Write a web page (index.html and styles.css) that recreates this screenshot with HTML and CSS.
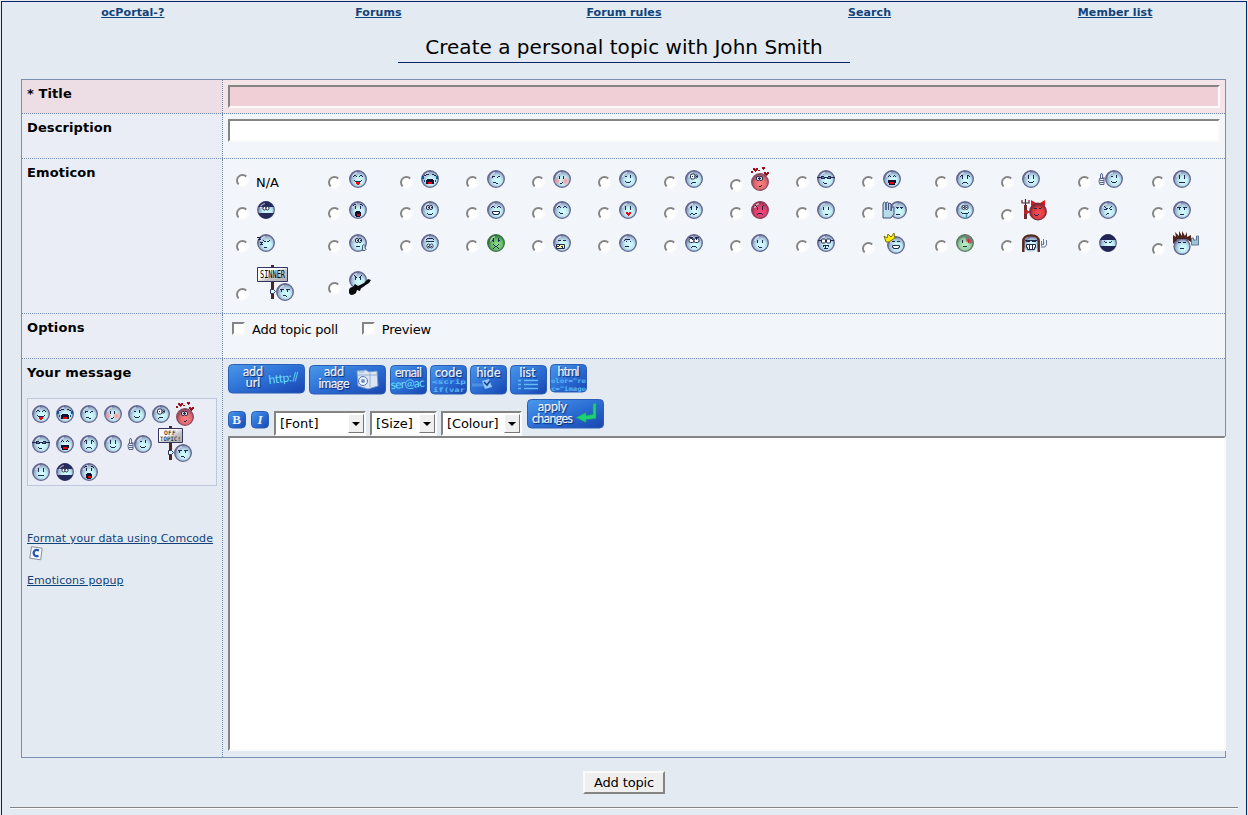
FILE: index.html
```html
<!DOCTYPE html>
<html lang="en">
<head>
<meta charset="utf-8">
<title>Create a personal topic with John Smith</title>
<link rel="stylesheet" href="styles.css">
</head>
<body>
<svg class="sprites" width="0" height="0" aria-hidden="true">
<defs>
<radialGradient id="gBlue" cx=".57" cy=".6" r=".58"><stop offset="0" stop-color="#d2ffff"/><stop offset=".45" stop-color="#c3ecf3"/><stop offset=".8" stop-color="#9bb2cc"/><stop offset="1" stop-color="#676a94"/></radialGradient>
<radialGradient id="gRed" cx=".55" cy=".6" r=".58"><stop offset="0" stop-color="#ff8080"/><stop offset=".6" stop-color="#e06a70"/><stop offset="1" stop-color="#7d4a62"/></radialGradient>
<radialGradient id="gRage" cx=".55" cy=".6" r=".58"><stop offset="0" stop-color="#f84878"/><stop offset=".6" stop-color="#dc426c"/><stop offset="1" stop-color="#80334f"/></radialGradient>
<radialGradient id="gDevil" cx=".55" cy=".6" r=".58"><stop offset="0" stop-color="#ff4d55"/><stop offset=".6" stop-color="#dc3b42"/><stop offset="1" stop-color="#6b2430"/></radialGradient>
<radialGradient id="gGreen" cx=".57" cy=".6" r=".58"><stop offset="0" stop-color="#91e391"/><stop offset=".6" stop-color="#65b868"/><stop offset="1" stop-color="#2b6837"/></radialGradient>
<radialGradient id="gBorg" cx=".5" cy=".6" r=".58"><stop offset="0" stop-color="#bdf5c7"/><stop offset=".6" stop-color="#97cba2"/><stop offset="1" stop-color="#4c7058"/></radialGradient>
<linearGradient id="gBtn" x1="0" y1="0" x2="1" y2="1"><stop offset="0" stop-color="#4a98ea"/><stop offset=".5" stop-color="#2c6fd5"/><stop offset="1" stop-color="#1845b0"/></linearGradient>
<linearGradient id="gSign" x1="0" y1="0" x2="1" y2="1"><stop offset=".4" stop-color="#fff"/><stop offset=".6" stop-color="#c4c4c8"/><stop offset="1" stop-color="#aaaab0"/></linearGradient>
<radialGradient id="gBlush"><stop offset="0" stop-color="#ff8f92"/><stop offset="1" stop-color="#ff8f92" stop-opacity="0"/></radialGradient>
</defs>
<symbol id="ball"><circle cx="9" cy="9" r="8.300" fill="url(#gBlue)" stroke="#60658f" stroke-width="1.300"/><path d="M3.500 7Q4.500 3.500 8 2.700" class="shine"/></symbol>
<symbol id="smile"><use href="#ball"/><path class="px" d="M6.500 5v4M11.500 5v4M6 11.500h1M7 12.500h4M11 11.500h1"/></symbol>
<symbol id="neutral"><use href="#ball"/><path class="px" d="M6.500 5v4M11.500 5v4M6 12.500h6"/></symbol>
<symbol id="blank"><use href="#ball"/><path class="px" d="M6.500 6v3M11.500 6v3M8 13.500h3"/></symbol>
<symbol id="plain"><use href="#ball"/><path class="px" d="M6.500 6v3M11.500 6v3M7 12.500h1M8 13.500h3"/></symbol>
<symbol id="tongue"><use href="#ball"/><path class="px" d="M4 6.500h1M5 5.500h2M7 6.500h1M10 6.500h1M11 5.500h2M13 6.500h1M5 10.500h1M6 11.500h6M12 10.500h1"/><path d="M7 12h4v2h-1v1h-2v-1h-1z" fill="#f01"/></symbol>
<symbol id="cry"><use href="#ball"/><path class="px" d="M3 5.500h2M5 4.500h3M11 4.500h2M13 5.500h2"/><path d="M1 6h2v3h-2zM15 6h2v3h-2zM3 10h1v2h-1zM14 10h1v2h-1z" fill="#06589b"/><path d="M6 9h6v1h1v4h-8v-4h1z" fill="#111331"/><path d="M7 12h4v2h-4z" fill="#e01"/></symbol>
<symbol id="skeptic"><use href="#ball"/><path class="px" d="M5 6.500h3M10 7.500h1M11 6.500h2M6 12.500h3M9 13.500h2M5 7.500h1"/></symbol>
<symbol id="blush"><use href="#ball"/><circle cx="12.500" cy="11" r="4.500" fill="url(#gBlush)"/><circle cx="4" cy="11" r="3.500" fill="url(#gBlush)"/><path class="px" d="M6.500 6v3M10.500 6v3M7 13.500h2M9 12.500h1"/></symbol>
<symbol id="wink"><use href="#ball"/><path class="px" d="M6 6.500h2M11.500 5v3M6 11.500h1M7 12.500h4M11 11.500h1"/></symbol>
<symbol id="confused"><use href="#ball"/><rect class="eye" x="5.500" y="4" width="4.500" height="5" rx="1.500"/><rect class="eye" x="10" y="5" width="2.500" height="3" rx="1"/><path class="px" d="M7 6.500h1M11 6.500h1M6 13.500h1M7 12.500h4"/></symbol>
<symbol id="love"><circle cx="9" cy="15" r="8.300" fill="url(#gRed)" stroke="#8b4a5d" stroke-width="1.300"/><path d="M2 1h2v1h1v-1h2v2h-1v1h-1v1h-1v-1h-1v-1h-1zM11 0h3v2h-1v1h-1v-1h-1zM13 5h2v1h1v-1h2v2h-1v1h-1v1h-1v-1h-1v-1h-1zM7 3h2v1h-2zM0 4h2v2h-2z" fill="#9c0f1d"/><rect class="eye" x="5.500" y="9.500" width="3" height="4" rx="1.500"/><rect class="eye" x="8.500" y="9.500" width="3" height="4" rx="1.500"/><path class="px" d="M7 11.500h1M9 11.500h1M8 19.500h2M10 18.500h1"/></symbol>
<symbol id="cool"><use href="#ball"/><path class="px" d="M0 7.500h18M4 8.500h4M10 8.500h4M4 6.500h3M11 6.500h3M6 12.500h1M7 13.500h3"/><path d="M5 7h2v1h-2zM11 7h2v1h-2z" fill="#6d7da0"/></symbol>
<symbol id="laugh"><use href="#ball"/><path class="px" d="M5 6.500h1M6 5.500h1M7 6.500h1M10 6.500h1M11 5.500h1M12 6.500h1"/><path d="M5 10h8v3h-1v2h-6v-2h-1z" fill="#101431"/><path d="M7 12h4v2h-4z" fill="#e00"/></symbol>
<symbol id="sad"><use href="#ball"/><path class="px" d="M4 6.500h1M5 5.500h2M6.500 6v3M11.500 6v3M11 5.500h2M13 6.500h1M6 13.500h1M7 12.500h4M11 13.500h1"/></symbol>
<symbol id="thumbs"><path d="M2.500 8V5q.5-2 1.500-1.500T4.500 8H7M1.500 8.500h4.500v6h-4l-1-3zM2 10.500h4M2 12.500h4" fill="#e8f4fa" stroke="#59638e"/><use href="#wink" x="7"/></symbol>
<symbol id="cyber"><use href="#ball"/><path d="M1 6Q4 .3 9 .3t8 5.700zM1 12h16Q14 17.700 9 17.700T1 12z" fill="#25295b"/><rect class="eye" x="6" y="5.500" width="3" height="3.500" rx="1.500"/><rect class="eye" x="9" y="5.500" width="3" height="3.500" rx="1.500"/><path class="shine" d="M3.500 5.500Q5 3 8 2.500"/></symbol>
<symbol id="ninja"><use href="#ball"/><path d="M1 6Q4 .3 9 .3t8 5.700zM1 12h16Q14 17.700 9 17.700T1 12z" fill="#202556"/><path class="px" d="M5 7.500h1M6 8.500h2M10 8.500h2M12 7.500h1"/></symbol>
<symbol id="shock"><use href="#ball"/><path class="px" d="M4 4.500h1M5 3.500h2M6.500 5v3M11.500 5v3M11 3.500h2M13 4.500h1"/><path d="M7 10h4v1h1v4h-1v1h-4v-1h-1v-4h1z" fill="#10122b"/><path d="M8 13h3v2h-3z" fill="#e00"/></symbol>
<symbol id="rolling"><use href="#ball"/><rect class="eye" x="5.500" y="4.500" width="3" height="4" rx="1.500"/><rect class="eye" x="8.500" y="4.500" width="3" height="4" rx="1.500"/><path class="px" d="M7 6.500h1M10 6.500h1M6 12.500h1M7 13.500h4M11 12.500h1"/></symbol>
<symbol id="grin"><use href="#ball"/><path class="px" d="M4 6.500h1M5 5.500h2M7 6.500h1M10 6.500h1M11 5.500h2M13 6.500h1"/><path class="eye" d="M5.500 10.500h7v2h-1v1h-5v-1h-1z"/></symbol>
<symbol id="glee"><use href="#ball"/><path class="px" d="M4 6.500h1M5 5.500h2M7 6.500h1M10 6.500h1M11 5.500h2M13 6.500h1M6 11.500h1M7 12.500h3"/></symbol>
<symbol id="kiss"><use href="#ball"/><path class="px" d="M6.500 5v4M11.500 5v4"/><path d="M7 11h2v1h1v-1h2v2h-1v1h-1v1h-1v-1h-1v-1h-1z" fill="#f00010"/></symbol>
<symbol id="worry"><use href="#ball"/><path class="px" d="M5 6.500h1M6.500 5v4M11.500 5v4M12 6.500h1M5 13.500h1M6 12.500h2M8 13.500h2M10 12.500h2"/></symbol>
<symbol id="rage"><circle cx="9" cy="9" r="8.300" fill="url(#gRage)" stroke="#8b3a58" stroke-width="1.300"/><path class="shine" d="M3.500 7Q4.500 3.500 8 2.700"/><path class="px" d="M4 4.500h1M5 5.500h1M6.500 6v3M12 4.500h1M11 5.500h1M11.500 6v3M7 12.500h4M11 13.500h1M6 13.500h1"/></symbol>
<symbol id="hand"><use href="#ball" x="7"/><path class="px" d="M14 6.500h3M18 6.500h3M15.500 7v1M19.500 7v1M14 13.500h4"/><path d="M1 17V4q0-3 1.500-3T4 4v5-7q1.500-2 2.500 0v7-6q1.500-2 2.500 0v7l1-4q2-1 2 1v6l-3 4z" fill="#b7dce8" stroke="#454c7c"/></symbol>
<symbol id="drool"><use href="#ball"/><rect class="eye" x="6" y="4.500" width="3" height="4" rx="1.500"/><rect class="eye" x="9" y="4.500" width="3" height="4" rx="1.500"/><path class="px" d="M7 6.500h1M10 6.500h1M5 11.500h1M6 12.500h6M12 11.500h1"/><path d="M10.500 13v5" stroke="#409ac4" stroke-width="1.500"/></symbol>
<symbol id="devil"><path d="M4.500 2v18M1 1v3h7V1M4.500 0v5" fill="none" stroke="#54252c" stroke-width="1.200"/><path d="M3 6h3v14H3z" fill="#6b2d30"/><path d="M10 1v6l5-3zM24 1v6l-5-3z" fill="#e8121c"/><circle cx="17" cy="12.500" r="8.300" fill="url(#gDevil)" stroke="#7c2c38" stroke-width="1.300"/><path d="M3 11h3l3 2-3 2H3z" fill="#b8232c"/><path class="px" d="M13 9.500h3M18 9.500h2M20 8.500h1M13 15.500h1M14 16.500h3M17 15.500h1"/></symbol>
<symbol id="grr"><use href="#ball"/><path class="px" d="M5 5.500h1M6 6.500h1M7 7.500h2M12 5.500h1M11 6.500h1M10 7.500h1M5 8.500h3M11 8.500h2M7 13.500h1M8 12.500h2"/></symbol>
<symbol id="dry"><use href="#ball"/><path class="px" d="M4 6.500h4M10 6.500h4M6.500 7v2M11.500 7v2M7 13.500h4"/></symbol>
<symbol id="zzz"><use href="#ball"/><path class="px" d="M0 3.500h4M2 4.500h1M1 5.500h3M3 8.500h3M4 9.500h1M3 10.500h3M6 6.500h1M7 7.500h2M10 7.500h2M12 6.500h1M7 13.500h3"/></symbol>
<symbol id="puzzled"><use href="#ball"/><rect class="eye" x="6.500" y="4.500" width="3" height="4" rx="1.500"/><rect class="eye" x="9.500" y="4.500" width="3" height="4" rx="1.500"/><path class="px" d="M7 12.500h4M8 6.500h1M11 6.500h1"/><path d="M13.500 11.500q2-2 2.500 0v2q2 2 0 3h-2.500z" fill="#bcecf4" stroke="#4c577e"/></symbol>
<symbol id="flip"><use href="#ball"/><rect class="eye" x="6" y="10" width="3" height="4" rx="1.500"/><rect class="eye" x="9" y="10" width="3" height="4" rx="1.500"/><path class="px" d="M5 7.500h8M5 5.500h1M6 4.500h6M12 5.500h1M7 12.500h1M10 12.500h1"/></symbol>
<symbol id="sick"><circle cx="9" cy="9" r="8.300" fill="url(#gGreen)" stroke="#35703f" stroke-width="1.300"/><path class="shine" d="M3.500 7Q4.500 3.500 8 2.700"/><path class="px" d="M5 6.500h1M6.500 4v4M11.500 4v4M12 6.500h1M6 10.500h1M7 11.500h1M8 12.500h2M10 11.500h1M11 10.500h1M7 13.500h1M6 14.500h1M10 13.500h1M11 14.500h1"/></symbol>
<symbol id="teeth"><use href="#ball"/><path class="px" d="M5 6.500h3M10 6.500h3"/><path d="M3.500 10.500h8v4h-8z" fill="#fff9a4" stroke="#202a45"/><path class="px" d="M4 12.500h2M8 12.500h2M6.500 11v1M9.500 13v1"/></symbol>
<symbol id="wonder"><use href="#ball"/><path class="px" d="M5 6.500h1M6 5.500h5M7.500 7v1M11.500 7v1M6 12.500h4"/><path d="M6 7h1v2h-1zM10 7h1v2h-1z" fill="#fff"/></symbol>
<symbol id="eek"><use href="#ball"/><rect class="eye" x="4" y="4.500" width="5" height="4" rx="1.500"/><rect class="eye" x="9" y="4.500" width="5" height="4" rx="1.500"/><path class="px" d="M4 3.500h4M10 3.500h4M7 5.500h1M11 5.500h1M6 13.500h1M7 12.500h4M11 13.500h1"/></symbol>
<symbol id="nerd"><use href="#ball"/><rect class="eye" x="4.500" y="5" width="4" height="4" rx="1"/><rect class="eye" x="9.500" y="5" width="4" height="4" rx="1"/><path class="px" d="M1 6.500h4M14 6.500h3M6 11.500h6M7 14.500h4M6.500 12v1M8.500 12v2M11.500 12v1"/></symbol>
<symbol id="king"><use href="#ball" x="4" y="4"/><path d="M1 4l3 2 1-4 3 3 3-4 1 5-6 4H3z" fill="#f6ec08" stroke="#776d17"/><path class="px" d="M9 9.500h3M14 9.500h3"/><path class="eye" d="M9.500 13.500h7v2h-1v1h-5v-1h-1z"/></symbol>
<symbol id="borg"><circle cx="9" cy="9" r="8.300" fill="url(#gBorg)" stroke="#607766" stroke-width="1.300"/><path d="M9 1q7 0 8 7l-3 2-4-4z" fill="#737c79"/><path class="px" d="M6.500 6v3M7 12.500h4"/><path d="M12.500 5v4M10.500 7h4" stroke="#f01824"/></symbol>
<symbol id="rocker"><circle cx="9" cy="10" r="7.500" fill="url(#gBlue)"/><path d="M1.300 18V8Q1 1.500 9 1.500T16.700 8v10" fill="none" stroke="#532d24" stroke-width="2.500"/><path class="px" d="M3 6.500h12M4 7.500h4M10 7.500h4"/><path class="eye" d="M4.500 10.500h9v3h-1v2h-7v-2h-1z"/><path class="px" d="M7.500 11v4M10.500 11v4"/><path d="M19.500 12V7m0 4l3-2m-1 2V5m3 5V6M19 13h4l2-3" fill="none" stroke="#65789d"/></symbol>
<symbol id="punk"><circle cx="9" cy="15.500" r="8" fill="url(#gBlue)" stroke="#60658f" stroke-width="1.300"/><path d="M0 13V4l3 2-1-5 4 4V0l3 5V0l3 5 2-4v5l4-2v7l-5-3H5z" fill="#4b221d"/><path class="px" d="M5 11.500h3M10 11.500h3M7 17.500h4"/><path d="M18.500 7v7h7V5h-2v4h-3V7z" fill="#9fc6d6" stroke="#5b7792"/></symbol>
<symbol id="grump"><use href="#ball"/><path class="px" d="M4 6.500h4M10 6.500h4M5.500 7v2M11.500 7v2M7 12.500h3M10 13.500h1"/></symbol>
<symbol id="sinner"><path d="M15.500 0v34" stroke="#4b2724" stroke-width="3"/><path d="M.5 2.500h30v14H.5z" fill="url(#gSign)" stroke="#34345f"/><text x="3" y="13" textLength="25" lengthAdjust="spacingAndGlyphs" class="sign">SINNER</text><use href="#grump" x="19" y="18"/><path d="M13.500 24.500h3l2 2-2 2h-3z" fill="#d4ffff" stroke="#34345f"/></symbol>
<symbol id="offtopic"><path d="M12.500 0v34" stroke="#4b2724" stroke-width="3"/><path d="M.5 2.500h24v14H.5z" fill="url(#gSign)" stroke="#34345f"/><text x="6" y="8.800" textLength="12" lengthAdjust="spacingAndGlyphs" class="sign sign-small">OFF</text><text x="2" y="15.200" textLength="21" lengthAdjust="spacingAndGlyphs" class="sign sign-small">TOPIC!</text><use href="#grump" x="16" y="18"/><path d="M10.500 24.500h3l2 2-2 2h-3z" fill="#d4ffff" stroke="#34345f"/></symbol>
<symbol id="guitar"><use href="#ball"/><path class="px" d="M5 4.500h1M6 5.500h1M7 6.500h1M12 4.500h1M11 5.500h1M10 6.500h1M6.500 6v3M11.500 6v3"/><path d="M0 20q0-4 4-4l2-3 3 2 6-3 4-4 3 1-2 3-8 5-1 3-3-1-1 3q-5 4-7 0z" fill="#080a0c"/></symbol>
</svg>

<div class="frame">
<nav class="nav"><a href="#">ocPortal-?</a><a href="#">Forums</a><a href="#">Forum rules</a><a href="#">Search</a><a href="#">Member list</a></nav>
<h1 class="heading">Create a personal topic with John Smith</h1>

<form class="form">
<div class="row row-title required"><div class="label">* Title</div><div class="field"><input class="text" type="text"></div></div>
<div class="row row-desc"><div class="label">Description</div><div class="field"><input class="text" type="text"></div></div>
<div class="row row-emo"><div class="label">Emoticon</div>
<div class="field picks">
<label class="pick pick-na"><input type="radio" name="e"><span>N/A</span></label>
<label class="pick"><input type="radio" name="e"><svg class="emo"><use href="#tongue"/></svg></label>
<label class="pick"><input type="radio" name="e"><svg class="emo"><use href="#cry"/></svg></label>
<label class="pick"><input type="radio" name="e"><svg class="emo"><use href="#skeptic"/></svg></label>
<label class="pick"><input type="radio" name="e"><svg class="emo"><use href="#blush"/></svg></label>
<label class="pick"><input type="radio" name="e"><svg class="emo"><use href="#wink"/></svg></label>
<label class="pick"><input type="radio" name="e"><svg class="emo"><use href="#confused"/></svg></label>
<label class="pick"><input type="radio" name="e"><svg class="emo tall"><use href="#love"/></svg></label>
<label class="pick"><input type="radio" name="e"><svg class="emo"><use href="#cool"/></svg></label>
<label class="pick"><input type="radio" name="e"><svg class="emo"><use href="#laugh"/></svg></label>
<label class="pick"><input type="radio" name="e"><svg class="emo"><use href="#sad"/></svg></label>
<label class="pick"><input type="radio" name="e"><svg class="emo"><use href="#smile"/></svg></label>
<label class="pick"><input type="radio" name="e"><svg class="emo wide out"><use href="#thumbs"/></svg></label>
<label class="pick"><input type="radio" name="e"><svg class="emo"><use href="#neutral"/></svg></label>

<label class="pick"><input type="radio" name="e"><svg class="emo"><use href="#cyber"/></svg></label>
<label class="pick"><input type="radio" name="e"><svg class="emo"><use href="#shock"/></svg></label>
<label class="pick"><input type="radio" name="e"><svg class="emo"><use href="#rolling"/></svg></label>
<label class="pick"><input type="radio" name="e"><svg class="emo"><use href="#grin"/></svg></label>
<label class="pick"><input type="radio" name="e"><svg class="emo"><use href="#glee"/></svg></label>
<label class="pick"><input type="radio" name="e"><svg class="emo"><use href="#kiss"/></svg></label>
<label class="pick"><input type="radio" name="e"><svg class="emo"><use href="#worry"/></svg></label>
<label class="pick"><input type="radio" name="e"><svg class="emo"><use href="#rage"/></svg></label>
<label class="pick"><input type="radio" name="e"><svg class="emo"><use href="#blank"/></svg></label>
<label class="pick"><input type="radio" name="e"><svg class="emo wide out"><use href="#hand"/></svg></label>
<label class="pick"><input type="radio" name="e"><svg class="emo"><use href="#drool"/></svg></label>
<label class="pick"><input type="radio" name="e"><svg class="emo big out"><use href="#devil"/></svg></label>
<label class="pick"><input type="radio" name="e"><svg class="emo"><use href="#grr"/></svg></label>
<label class="pick"><input type="radio" name="e"><svg class="emo"><use href="#dry"/></svg></label>

<label class="pick"><input type="radio" name="e"><svg class="emo"><use href="#zzz"/></svg></label>
<label class="pick"><input type="radio" name="e"><svg class="emo"><use href="#puzzled"/></svg></label>
<label class="pick"><input type="radio" name="e"><svg class="emo"><use href="#flip"/></svg></label>
<label class="pick"><input type="radio" name="e"><svg class="emo"><use href="#sick"/></svg></label>
<label class="pick"><input type="radio" name="e"><svg class="emo"><use href="#teeth"/></svg></label>
<label class="pick"><input type="radio" name="e"><svg class="emo"><use href="#wonder"/></svg></label>
<label class="pick"><input type="radio" name="e"><svg class="emo"><use href="#eek"/></svg></label>
<label class="pick"><input type="radio" name="e"><svg class="emo"><use href="#plain"/></svg></label>
<label class="pick"><input type="radio" name="e"><svg class="emo"><use href="#nerd"/></svg></label>
<label class="pick"><input type="radio" name="e"><svg class="emo big"><use href="#king"/></svg></label>
<label class="pick"><input type="radio" name="e"><svg class="emo"><use href="#borg"/></svg></label>
<label class="pick"><input type="radio" name="e"><svg class="emo big short"><use href="#rocker"/></svg></label>
<label class="pick"><input type="radio" name="e"><svg class="emo"><use href="#ninja"/></svg></label>
<label class="pick"><input type="radio" name="e"><svg class="emo big punk"><use href="#punk"/></svg></label>

<label class="pick last"><input type="radio" name="e"><svg class="emo board"><use href="#sinner"/></svg></label>
<label class="pick last"><input type="radio" name="e"><svg class="emo tall guitar"><use href="#guitar"/></svg></label>
</div></div>
<div class="row row-opts"><div class="label">Options</div><div class="field opts">
<label class="opt"><input type="checkbox">Add topic poll</label><label class="opt"><input type="checkbox">Preview</label></div></div>

<div class="row row-msg">
<div class="label"><div>Your message</div>
<div class="box">
<div class="line"><svg class="emo"><use href="#tongue"/></svg><svg class="emo"><use href="#cry"/></svg><svg class="emo"><use href="#skeptic"/></svg><svg class="emo"><use href="#blush"/></svg><svg class="emo"><use href="#wink"/></svg><svg class="emo"><use href="#confused"/></svg><svg class="emo tall"><use href="#love"/></svg></div>
<div class="line"><svg class="emo"><use href="#cool"/></svg><svg class="emo"><use href="#laugh"/></svg><svg class="emo"><use href="#sad"/></svg><svg class="emo"><use href="#smile"/></svg><svg class="emo wide out"><use href="#thumbs"/></svg><svg class="emo board"><use href="#offtopic"/></svg></div>
<div class="line"><svg class="emo"><use href="#neutral"/></svg><svg class="emo"><use href="#cyber"/></svg><svg class="emo"><use href="#shock"/></svg></div>
</div>
<div class="help"><a href="#">Format your data using Comcode</a>
<svg class="comcode" width="14" height="15" viewBox="0 0 14 15"><path d="M2.500.7l10.700 1.500-1.500 11.600L.8 12.200z" fill="#f5f6fa" stroke="#8b8e98"/><path d="M10 4.500Q5 2.500 4.600 7.200 5 11 9.500 9.800" fill="none" stroke="#2354b4" stroke-width="2.300"/></svg></div>
<div class="help"><a href="#">Emoticons popup</a></div>
</div>
<div class="field">
<div class="tools">
<svg class="tool first" width="77" height="30"><rect x=".5" y=".5" width="76" height="28.500" rx="4" class="face"/><text x="25" y="12" class="cap">add</text><text x="25" y="23" class="cap">url</text><text x="41" y="20" class="code" transform="rotate(-7 41 20)" textLength="31">http://</text></svg>
<svg class="tool first low" width="77" height="30"><rect x=".5" y=".5" width="76" height="28.500" rx="4" class="face"/><text x="25" y="11" class="cap">add</text><text x="25" y="23" class="cap" textLength="31">image</text><path d="M48 6l9-1 3 2 8-1 1 15-10 3-10-3z" fill="#dce6f3" stroke="#7c9bd0"/><path d="M49 10h19M61 8v14M50 7h5" stroke="#96acd0" fill="none"/><circle cx="54" cy="16" r="4.500" fill="#eef3fb" stroke="#5476b5"/><circle cx="54" cy="16" r="2" fill="#7390be"/></svg>
<svg class="tool low" width="37" height="30"><rect x=".5" y=".5" width="36" height="28.500" rx="4" class="face"/><text x="18.500" y="11.500" class="cap" textLength="27">email</text><text x="1" y="24" class="code" transform="rotate(-4 1 24)" textLength="34">ser@ac</text></svg>
<svg class="tool low" width="37" height="30"><rect x=".5" y=".5" width="36" height="28.500" rx="4" class="face"/><text x="18.500" y="11.500" class="cap" textLength="27">code</text><text x="2" y="19" class="mono" textLength="34" lengthAdjust="spacingAndGlyphs">&lt;scrip</text><text x="3" y="26.500" class="mono" textLength="32" lengthAdjust="spacingAndGlyphs">if(var</text></svg>
<svg class="tool low" width="37" height="30"><rect x=".5" y=".5" width="36" height="28.500" rx="4" class="face"/><text x="18.500" y="11.500" class="cap" textLength="24">hide</text><path d="M2 20h18" stroke="#69acec" stroke-width="3" opacity=".5"/><path d="M12 16l7-2 3 8-7 2z" fill="#91c6f6"/><path d="M14 17l3 3 3-4" fill="none" stroke="#183d8f" stroke-width="1.500"/></svg>
<svg class="tool low" width="37" height="30"><rect x=".5" y=".5" width="36" height="28.500" rx="4" class="face"/><text x="17.500" y="11.500" class="cap">list</text><path d="M8 15.500h3M8 19.500h3M8 23.500h3M14 15.500h14M14 19.500h14M14 23.500h14" stroke="#61bcf8" stroke-width="1.500"/></svg>
<svg class="tool" width="37" height="30"><rect x=".5" y=".5" width="36" height="27.500" rx="4" class="face"/><text x="18.500" y="11.500" class="cap" textLength="22">html</text><text x="1" y="19" class="mono" textLength="35" lengthAdjust="spacingAndGlyphs">olor="re</text><text x="1" y="26.500" class="mono" textLength="35" lengthAdjust="spacingAndGlyphs">c="image</text></svg>
</div>
<div class="tools tools2">
<svg class="sq" width="18" height="18"><rect x=".5" y=".5" width="17" height="16.500" rx="4" class="face"/><text x="8.500" y="12.500" class="letter">B</text></svg>
<svg class="sq sq2" width="18" height="18"><rect x=".5" y=".5" width="17" height="16.500" rx="4" class="face"/><text x="9" y="12.500" class="letter ital">I</text></svg>
<div class="select s1"><span>[Font]</span><i class="arrow"></i></div>
<div class="select s2"><span>[Size]</span><i class="arrow"></i></div>
<div class="select s3"><span>[Colour]</span><i class="arrow"></i></div>
<svg class="apply" width="77" height="30"><rect x=".5" y=".5" width="76" height="28.500" rx="4" class="face"/><text x="25.500" y="11.500" class="cap" textLength="29">apply</text><text x="25.500" y="23.500" class="cap" textLength="41">changes</text><path d="M66 5l3-1v15.500l-10 1v3l-10-5 10-5v3l7-1z" fill="#20d074" stroke="#129c62" stroke-width=".5"/></svg>
</div>
<textarea class="area"></textarea>
</div></div>
</form>
<div class="submit"><button type="button" class="btn">Add topic</button></div>
<div class="rule"></div>
</div>
</body>
</html>
```
FILE: styles.css
```css
* { box-sizing: border-box; }
html { overflow: hidden; }
body { margin: 0; background: #e3eaf1; font: 13px/15px "DejaVu Sans", sans-serif; color: #000; }
.sprites { position: absolute; }
.frame { margin: 1px 1px 0; height: 814px; border: 1px solid #002566; border-bottom: 0; overflow: hidden; }
a { color: #11427a; text-decoration: underline; }

.nav { display: flex; margin: 4px 8px 0; height: 13px; font: bold 11px/13px "DejaVu Sans", sans-serif; letter-spacing: .08px; }
.nav a { flex: 1; text-align: center; }
.heading { width: 452px; height: 28px; margin: 16px auto 16px 396px; border-bottom: 1px solid #002566; font: 20px/24px "DejaVu Sans", sans-serif; letter-spacing: .02px; text-align: center; }

.form { width: 1205px; margin-left: 19px; border: 1px solid #7b8fb2; }
.row { display: grid; grid-template-columns: 200px 1fr; border-bottom: 1px dotted #6f86ae; background: #f2f5fa; }
.row-title { height: 34px; }
.row-desc, .row-opts { height: 45px; }
.row-emo { height: 155px; }
.row-msg { height: 398px; border-bottom: 0; background: none; }
.label { padding: 6px 5px 0; font-weight: bold; background: #eaedf5; letter-spacing: .1px; }
.row-msg .label { background: none; letter-spacing: .2px; }
.field { border-left: 1px dotted #6f86ae; padding: 5px 4px 0 5px; min-width: 0; }
.required { background: #f4e4e8; }
.required .label { background: #eddde4; }
.text { display: block; width: 992px; height: 23px; border: 2px solid; border-color: #848484 #fafafa #fafafa #848484; background: #fff; padding: 0 2px; }
.required .text { background: #f0cfd6; }

.field.picks { display: grid; grid-template-columns: 92px 72px repeat(7, 66px) 73px 66px 77px 74px 70px; grid-template-rows: 30px 32px 34px 46px; align-items: center; padding: 5px 0 0 13px; }
.pick { display: flex; align-items: flex-end; }
.pick input { appearance: none; flex: none; width: 13px; height: 13px; margin: 0 8px -1px 0; border: 2px solid; border-color: #848484 #fbfbfb #fbfbfb #848484; border-radius: 50%; background: #fff; }
.pick-na { align-items: flex-start; padding-top: 5px; }
.pick-na input { margin: 0 7px 0 0; }
.pick-na span { padding-top: 1px; }
.pick.last input { margin-bottom: 0; }
.emo { display: block; flex: none; width: 18px; height: 18px; }
.emo.tall { height: 24px; }
.emo.wide { width: 25px; }
.emo.out { margin-left: -1px; }
.emo.big { width: 26px; height: 22px; }
.emo.big.short { height: 18px; }
.emo.big.punk { width: 27px; height: 24px; }
.emo.board { width: 37px; height: 36px; }
.emo.guitar { width: 24px; }
.px { fill: none; stroke: #20284f; stroke-width: 1; shape-rendering: crispEdges; }
.eye { fill: #fff; stroke: #20284f; stroke-width: 1; }
.shine { fill: none; stroke: #fff; stroke-opacity: .6; stroke-width: 1.2; }
.sign { font: 10px "DejaVu Sans Mono", monospace; fill: #000; stroke: none; }
.sign-small { font-size: 6px; }

.field.opts { display: flex; align-items: flex-start; gap: 24px; padding: 8px 0 0 9px; letter-spacing: -.22px; }
.opt { display: flex; white-space: nowrap; }
.opt input { appearance: none; width: 13px; height: 13px; margin: 0 7px 0 0; border: 2px solid; border-color: #848484 #fafafa #fafafa #848484; background: #fff; }

.box { width: 190px; height: 88px; margin-top: 18px; margin-bottom: 45px; padding-left: 4px; border: 1px solid #bcc8dc; background: #eaedf5; }
.line { display: flex; align-items: center; gap: 6px; height: 30px; }
.line:last-child { height: 26px; }
.help { font: 11px/15px "DejaVu Sans", sans-serif; height: 42px; white-space: nowrap; letter-spacing: .08px; }
.comcode { display: block; margin-left: 2px; }

.row-msg .field { padding: 5px 0 0 5px; }
.tools { display: flex; align-items: flex-start; gap: 4px; height: 35px; }
.tool { flex: none; margin-right: -1px; }
.tool.first { margin-right: 0; }
.tool.low { margin-top: 1px; }
.face { fill: url(#gBtn); stroke: #2a5fb5; }
.cap { font: 12.5px Lato, sans-serif; fill: #fff; stroke: #fff; stroke-width: .2px; text-anchor: middle; text-shadow: 1px 1px 1px #0d2c78; }
.code { font: 12px Lato, sans-serif; fill: #67dcff; }
.mono { font: bold 6.3px "DejaVu Sans Mono", monospace; fill: #5cb8f6; }
.letter { font: bold 13px "Liberation Serif", serif; fill: #e8f2ff; text-anchor: middle; }
.ital { font-style: italic; }
.tools2 { gap: 0; height: 37px; }
.sq { margin-top: 12px; flex: none; }
.sq2 { margin-left: 5px; }
.select { display: flex; align-items: center; height: 25px; margin-top: 12px; padding: 0 0 0 4px; border: 2px solid; border-color: #848484 #fafafa #fafafa #848484; background: #fff; }
.select span { flex: 1; white-space: nowrap; }
.s1 { width: 92px; margin-left: 5px; }
.s2 { width: 67px; margin-left: 4px; }
.s3 { width: 81px; margin-left: 4px; letter-spacing: -.1px; }
.arrow { display: flex; align-items: center; justify-content: center; width: 16px; height: 19px; background: #efefef; border: 1px solid; border-color: #fff #777 #777 #fff; }
.arrow::after { content: ""; border: 4px solid transparent; border-top-color: #000; border-bottom: 0; }
.apply { flex: none; margin-left: 5px; }
.area { display: block; position: relative; width: 998px; height: 315px; border: 2px solid; border-color: #848484 #fafafa #fafafa #848484; background: #fff; resize: none; margin: 0; }

.submit { display: flex; justify-content: center; padding: 13px 0; }
.btn { width: 82px; height: 23px; padding: 0; border: 2px solid; border-color: #fafafa #848484 #848484 #fafafa; background: #efefef; font: 13px/15px "DejaVu Sans", sans-serif; letter-spacing: -.15px; color: #000; }
.rule { margin: 0 8px; height: 2px; border-top: 1px solid #848484; border-bottom: 1px solid #fafafa; }
```
